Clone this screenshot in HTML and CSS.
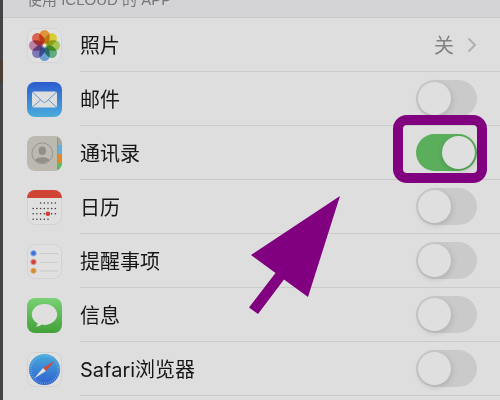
FILE: index.html
```html
<!DOCTYPE html>
<html lang="zh-CN">
  <head>
    <meta charset="UTF-8" />
    <meta name="viewport" content="width=device-width, initial-scale=1.0" />
    <title>iCloud</title>
    <link rel="stylesheet" href="styles.css">
  </head>
  <body>
    <main class="settings">
      <h1 class="section-title">使用 ICLOUD 的 APP</h1>
      <ul class="list">
        <li class="row">
          <svg class="icon" viewBox="0 0 35 35" aria-hidden="true">
            <rect x=".5" y=".5" width="34" height="34" rx="8" fill="#e1e1e1" stroke="#d5d5d5" />
            <g class="petals">
              <rect x="12.3" y="2" width="10.4" height="13.8" rx="5.2" fill="#df963b" />
              <rect x="12.3" y="2" width="10.4" height="13.8" rx="5.2" fill="#d9cc3c" transform="rotate(45 17.5 17.5)" />
              <rect x="12.3" y="2" width="10.4" height="13.8" rx="5.2" fill="#a5c557" transform="rotate(90 17.5 17.5)" />
              <rect x="12.3" y="2" width="10.4" height="13.8" rx="5.2" fill="#61ad82" transform="rotate(135 17.5 17.5)" />
              <rect x="12.3" y="2" width="10.4" height="13.8" rx="5.2" fill="#6a9fd0" transform="rotate(180 17.5 17.5)" />
              <rect x="12.3" y="2" width="10.4" height="13.8" rx="5.2" fill="#8178b8" transform="rotate(225 17.5 17.5)" />
              <rect x="12.3" y="2" width="10.4" height="13.8" rx="5.2" fill="#bb7fa8" transform="rotate(270 17.5 17.5)" />
              <rect x="12.3" y="2" width="10.4" height="13.8" rx="5.2" fill="#db6350" transform="rotate(315 17.5 17.5)" />
            </g>
          </svg>
          <a class="line" href="#photos">
            <span class="name">照片</span>
            <span class="value">关</span>
            <svg class="chevron" viewBox="0 0 10 16" aria-hidden="true">
              <path d="M2 2l6 6-6 6" fill="none" stroke="#b0b0b2" stroke-width="2" stroke-linecap="round" stroke-linejoin="round" />
            </svg>
          </a>
        </li>
        <li class="row">
          <svg class="icon" viewBox="0 0 35 35" aria-hidden="true">
            <defs>
              <linearGradient id="mail" x2="0" y2="1">
                <stop offset="0" stop-color="#2c5bd0" />
                <stop offset="1" stop-color="#4aadda" />
              </linearGradient>
            </defs>
            <rect width="35" height="35" rx="8" fill="url(#mail)" />
            <rect x="5" y="9.5" width="25" height="16" rx="2" fill="#dedede" />
            <path d="M5.6 10.2l10.2 9.6q1.7 1.5 3.4 0l10.2-9.6M5.6 25l8.2-7.3M29.4 25l-8.2-7.3" fill="none" stroke="#5d98d6" />
          </svg>
          <div class="line">
            <label class="name" for="mail-switch">邮件</label>
            <span class="control"><input class="switch" type="checkbox" id="mail-switch"></span>
          </div>
        </li>
        <li class="row">
          <svg class="icon" viewBox="0 0 35 35" aria-hidden="true">
            <defs>
              <clipPath id="tile"><rect width="35" height="35" rx="8" /></clipPath>
              <clipPath id="face"><circle cx="15.3" cy="17.3" r="10" /></clipPath>
            </defs>
            <g clip-path="url(#tile)">
              <rect width="35" height="35" fill="#bcb9b0" />
              <rect x="30" width="5" height="9" fill="#aaa79f" />
              <rect x="31" y="9" width="4" height="9" fill="#65addb" />
              <rect x="31" y="18" width="4" height="9" fill="#dd8a2c" />
              <rect x="31" y="27" width="4" height="8" fill="#5dbb61" />
              <path d="M30.5 0v35" stroke="#96938c" />
            </g>
            <circle cx="15.3" cy="17.3" r="10.4" fill="none" stroke="#96948d" />
            <g clip-path="url(#face)" fill="#918f89">
              <ellipse cx="15.3" cy="14.8" rx="3.7" ry="4.3" />
              <ellipse cx="15.3" cy="25.8" rx="8" ry="4.6" />
            </g>
          </svg>
          <div class="line">
            <label class="name" for="contacts-switch">通讯录</label>
            <span class="control">
              <input class="switch" type="checkbox" id="contacts-switch" checked>
              <span class="highlight"></span>
              <svg class="arrow" viewBox="0 0 92 118" aria-hidden="true">
                <path d="M91 0L59 101 35 83.5 9 118 0 111.5 26.5 77 2 59z" fill="#800080" />
              </svg>
            </span>
          </div>
        </li>
        <li class="row">
          <svg class="icon" viewBox="0 0 35 35" aria-hidden="true">
            <rect x=".5" y=".5" width="34" height="34" rx="8" fill="#e0e0e0" stroke="#d2d2d2" />
            <path d="M0 8a8 8 0 0 1 8-8h19a8 8 0 0 1 8 8z" fill="#cf4435" />
            <g fill="none" stroke="#3c3c3c" stroke-width="1.6" stroke-linecap="round" stroke-dasharray="0 3.7">
              <path d="M13.6 13h15.5M6.2 18.5h23M6.2 23.7h23M6.2 29.2h15.5" />
            </g>
            <circle cx="20.9" cy="23.7" r="2.3" fill="#d23b2e" />
          </svg>
          <div class="line">
            <label class="name" for="calendar-switch">日历</label>
            <span class="control"><input class="switch" type="checkbox" id="calendar-switch"></span>
          </div>
        </li>
        <li class="row">
          <svg class="icon" viewBox="0 0 35 35" aria-hidden="true">
            <rect x=".5" y=".5" width="34" height="34" rx="8" fill="#e0e0e0" stroke="#d2d2d2" />
            <path d="M13 9.5h18M13 18.3h18M13 27h18" stroke="#cacaca" />
            <g fill="#3974d6" stroke="#9eb6df">
              <circle cx="6.5" cy="9.3" r="2.8" />
              <circle cx="6.5" cy="18" r="2.8" fill="#cf4840" stroke="#dca29e" />
              <circle cx="6.5" cy="26.8" r="2.8" fill="#d68b31" stroke="#dfc09a" />
            </g>
          </svg>
          <div class="line">
            <label class="name" for="reminders-switch">提醒事项</label>
            <span class="control"><input class="switch" type="checkbox" id="reminders-switch"></span>
          </div>
        </li>
        <li class="row">
          <svg class="icon" viewBox="0 0 35 35" aria-hidden="true">
            <defs>
              <linearGradient id="messages" x2="0" y2="1">
                <stop offset="0" stop-color="#78d174" />
                <stop offset="1" stop-color="#44a038" />
              </linearGradient>
            </defs>
            <rect width="35" height="35" rx="8" fill="url(#messages)" />
            <path d="M17.5 6C10.5 6 4.8 10.7 4.8 16.5c0 3.7 2.3 6.9 5.8 8.8-.1 1.5-.8 2.6-1.8 3.5 2.3-.1 4.2-.9 5.6-2.2 1 .2 2 .3 3.1.3 7 0 12.7-4.7 12.7-10.4S24.5 6 17.5 6z" fill="#dfdfdf" />
          </svg>
          <div class="line">
            <label class="name" for="messages-switch">信息</label>
            <span class="control"><input class="switch" type="checkbox" id="messages-switch"></span>
          </div>
        </li>
        <li class="row">
          <svg class="icon" viewBox="0 0 35 35" aria-hidden="true">
            <defs>
              <linearGradient id="safari" x2="0" y2="1">
                <stop offset="0" stop-color="#48abda" />
                <stop offset="1" stop-color="#2d5fd0" />
              </linearGradient>
            </defs>
            <rect x=".5" y=".5" width="34" height="34" rx="8" fill="#e0e0e0" stroke="#d2d2d2" />
            <circle cx="17.5" cy="17.5" r="15.5" fill="url(#safari)" />
            <circle cx="17.5" cy="17.5" r="13.8" fill="none" stroke="#8dbce2" stroke-width="2" stroke-dasharray=".5 1.6" />
            <path d="M28 8.500L19 19 16 16z" fill="#d5483d" />
            <path d="M7 26.500L16 16 19 19z" fill="#e2e2e2" />
          </svg>
          <div class="line">
            <label class="name" for="safari-switch">Safari浏览器</label>
            <span class="control"><input class="switch" type="checkbox" id="safari-switch"></span>
          </div>
        </li>
      </ul>
    </main>
  </body>
</html>
```
FILE: styles.css
```css
* {
  box-sizing: border-box;
  margin: 0;
  padding: 0;
}
body {
  padding-left: 3px;
  background: linear-gradient(#444446 60px, #4a3d34 60px, #4a3d34 82px, #444446 82px);
  font-family: "Liberation Sans", "Noto Sans CJK SC", sans-serif;
  color: #161616;
}
.settings {
  min-height: 100vh;
  background: #dedede;
  overflow: hidden;
}
.section-title {
  display: flex;
  align-items: flex-end;
  height: 18px;
  padding: 0 24px 7px;
  overflow: hidden;
  background: #d4d4d6;
  border-bottom: 1px solid #c9c9cb;
  color: #77777b;
  font-size: 15px;
  font-weight: 400;
  line-height: 20px;
}
.list {
  list-style: none;
}
.row {
  display: flex;
  align-items: center;
  gap: 18px;
  height: 54px;
  padding-left: 24px;
}
.icon {
  flex: none;
  width: 35px;
  height: 35px;
}
.petals {
  isolation: isolate;
}
.petals rect {
  mix-blend-mode: multiply;
}
.line {
  display: flex;
  flex: 1;
  align-items: center;
  height: 100%;
  padding-right: 23px;
  border-bottom: 1px solid #cbcbcc;
  color: inherit;
  text-decoration: none;
}
.name {
  flex: 1;
  padding-top: 2px;
  font-family: Inter, "Noto Sans CJK SC", sans-serif;
  font-size: 20px;
  line-height: 28px;
}
.value {
  margin-right: 13px;
  padding-top: 2px;
  color: #828284;
  font-size: 20px;
  line-height: 28px;
}
.chevron {
  width: 10px;
  height: 16px;
}
.control {
  position: relative;
  display: flex;
}
/* ios switch */
.switch {
  appearance: none;
  display: flex;
  width: 61px;
  height: 37px;
  padding: 2px;
  border-radius: 19px;
  background: #cacaca;
  cursor: pointer;
}
.switch::before {
  content: "";
  width: 33px;
  height: 33px;
  border-radius: 50%;
  background: #dfdfdf;
  box-shadow: 1px 2px 6px rgba(0, 0, 0, 0.14);
}
.switch:checked {
  justify-content: flex-end;
  background: #5aae5c;
}
/* marker over the contacts switch */
.highlight {
  position: absolute;
  top: -19px;
  left: -23px;
  width: 94px;
  height: 68px;
  border: 10px solid #800080;
  border-radius: 14px;
  pointer-events: none;
}
.arrow {
  position: absolute;
  top: 62px;
  right: 136px;
  width: 92px;
  height: 118px;
  pointer-events: none;
}
```
